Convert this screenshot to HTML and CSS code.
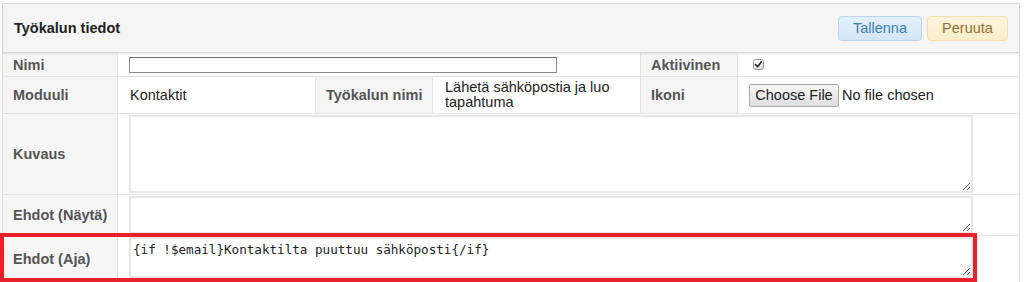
FILE: index.html
```html
<!DOCTYPE html>
<html lang="fi">
<head>
<meta charset="utf-8">
<title>Työkalun tiedot</title>
<link rel="stylesheet" href="styles.css">
</head>
<body>
<div class="page">
  <div class="panel">
    <div class="panel-head">
      <h2 class="title">Työkalun tiedot</h2>
      <div class="actions">
        <button class="btn btn-save" type="button">Tallenna</button>
        <button class="btn btn-cancel" type="button">Peruuta</button>
      </div>
    </div>
    <div class="form-grid">
      <div class="cell label">Nimi</div>
      <div class="cell span3 pad-input"><input class="text-input" type="text"></div>
      <div class="cell label">Aktiivinen</div>
      <div class="cell last pad-check">
        <span class="checkbox">
          <svg width="11" height="11" viewBox="0 0 11 11" aria-hidden="true">
            <defs>
              <linearGradient id="cbg" x1="0" y1="0" x2="0" y2="1">
                <stop offset="0" stop-color="#ffffff"/>
                <stop offset="1" stop-color="#d8d8d8"/>
              </linearGradient>
            </defs>
            <rect x="0.5" y="0.5" width="10" height="10" rx="2" fill="url(#cbg)" stroke="#9a9a9a"/>
            <path d="M2.6 5.6 L4.6 7.7 L8.4 2.9" fill="none" stroke="#333" stroke-width="1.7" stroke-linecap="round" stroke-linejoin="round"/>
          </svg>
        </span>
      </div>

      <div class="cell label">Moduuli</div>
      <div class="cell value">Kontaktit</div>
      <div class="cell label">Työkalun nimi</div>
      <div class="cell value wrap">Lähetä sähköpostia ja luo tapahtuma</div>
      <div class="cell label">Ikoni</div>
      <div class="cell last pad-input">
        <button class="file-btn" type="button">Choose File</button>
        <span class="file-name">No file chosen</span>
      </div>

      <div class="cell label">Kuvaus</div>
      <div class="cell span5 last area-cell"><textarea class="area area-lg"></textarea></div>

      <div class="cell label">Ehdot (Näytä)</div>
      <div class="cell span5 last area-cell"><textarea class="area area-sm"></textarea></div>

      <div class="cell label">Ehdot (Aja)</div>
      <div class="cell span5 last area-cell"><textarea class="area area-md">{if !$email}Kontaktilta puuttuu sähköposti{/if}</textarea></div>
    </div>
  </div>
  <div class="highlight"></div>
</div>
</body>
</html>
```

FILE: styles.css
```css
html, body {
  margin: 0;
  padding: 0;
  background: #ffffff;
}

body {
  font-family: "Liberation Sans", Arial, sans-serif;
  font-size: 14.5px;
  color: #222;
  overflow: hidden;
}

.page {
  position: relative;
  padding: 3px 4px 0 2px;
}

.panel {
  border: 1px solid #dcdcdc;
  border-bottom: none;
  background: #fff;
}

.panel-head {
  position: relative;
  z-index: 1;
  box-sizing: border-box;
  height: 49px;
  display: flex;
  align-items: center;
  justify-content: space-between;
  padding: 0 11px 0 11px;
  background: #f5f5f5;
  border-bottom: 1px solid #d6d6d6;
  box-shadow: 0 1px 2px rgba(0, 0, 0, 0.10);
}

.title {
  margin: 0;
  font-size: 14.5px;
  font-weight: bold;
  color: #222;
}

.actions {
  display: flex;
  gap: 5px;
}

.btn {
  box-sizing: border-box;
  height: 25px;
  padding: 0 12px;
  border-radius: 4px;
  font-family: "Liberation Sans", Arial, sans-serif;
  font-size: 14.5px;
  cursor: pointer;
}

.btn-save {
  width: 84px;
  color: #3a7fb0;
  background: linear-gradient(#e3f0fa, #d3e6f5);
  border: 1px solid #b9d6ee;
}

.btn-cancel {
  width: 81px;
  color: #8f7135;
  background: linear-gradient(#fcf5dd, #f9edc9);
  border: 1px solid #f0e0b0;
}

.form-grid {
  display: grid;
  grid-template-columns: 115px 198px 117px 208px 97px 281px;
  grid-template-rows: 24px 37px 81px 41px 47px;
}

.cell {
  box-sizing: border-box;
  display: flex;
  align-items: center;
  padding: 0 10px;
  border-right: 1px solid #e3e3e3;
  border-bottom: 1px solid #e3e3e3;
  min-width: 0;
}

.cell.last {
  border-right: none;
}

.label {
  background: #f5f5f5;
  font-weight: bold;
  color: #555;
  white-space: nowrap;
  padding-right: 0;
}

.value {
  color: #222;
  padding-left: 12px;
}

.wrap {
  line-height: 15px;
}

.span3 {
  grid-column: span 3;
}

.span5 {
  grid-column: span 5;
}

.pad-input {
  padding-left: 11px;
}

.pad-check {
  padding-left: 15px;
}

.text-input {
  box-sizing: border-box;
  width: 428px;
  height: 16px;
  margin: 0;
  padding: 0 2px;
  border: 1px solid #8c8c8c;
  border-top-color: #707070;
  background: #fff;
}

.checkbox {
  display: flex;
  width: 11px;
  height: 11px;
}

.file-btn {
  box-sizing: border-box;
  height: 23px;
  width: 90px;
  padding: 0;
  margin: 0;
  font-family: "Liberation Sans", Arial, sans-serif;
  font-size: 14.5px;
  color: #222;
  background: linear-gradient(#f6f6f6, #dedede);
  border: 1px solid #a9a9a9;
  border-radius: 2px;
}

.file-name {
  margin-left: 3px;
  color: #222;
}

.area-cell {
  align-items: flex-start;
  padding: 1px 0 0 11px;
}

.area {
  box-sizing: border-box;
  width: 844px;
  margin: 0;
  padding: 3px 2px;
  border: 2px solid #e6e6e6;
  background: #fff;
  font-family: "DejaVu Sans Mono", monospace;
  font-size: 12.6px;
  line-height: 15px;
  color: #222;
}

.area-lg {
  height: 78px;
}

.area-sm {
  height: 38px;
}

.area-md {
  height: 41px;
}

.highlight {
  position: absolute;
  left: 0;
  top: 233px;
  width: 977px;
  height: 49px;
  box-sizing: border-box;
  border: 4px solid #e8212b;
  pointer-events: none;
}
```
